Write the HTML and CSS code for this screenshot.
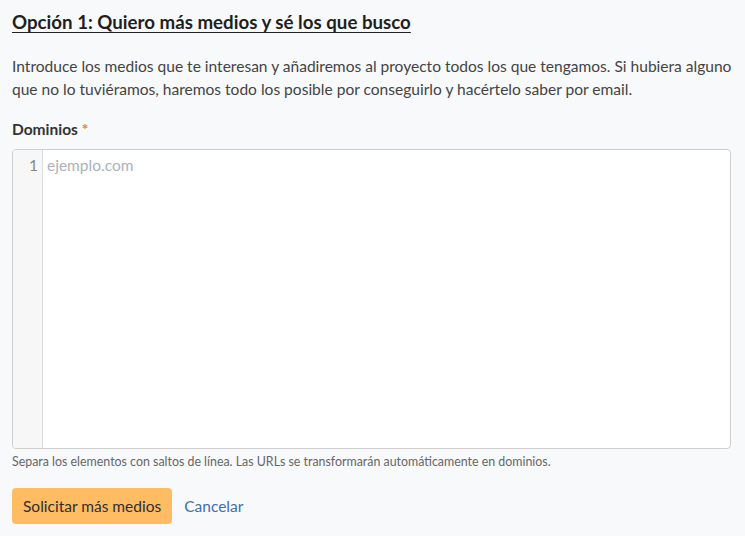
FILE: index.html
```html
<!DOCTYPE html>
<html lang="es">
<head>
<meta charset="utf-8">
<link rel="stylesheet" href="styles.css">
</head>
<body>
<div class="page">
  <h2 class="title">Opción 1: Quiero más medios y sé los que busco</h2>
  <p class="intro">Introduce los medios que te interesan y añadiremos al proyecto todos los que tengamos. Si hubiera alguno que no lo tuviéramos, haremos todo los posible por conseguirlo y hacértelo saber por email.</p>
  <label class="label">Dominios <span class="req">*</span></label>
  <div class="editor">
    <div class="gutter"><span class="ln">1</span></div>
    <div class="content"><span class="placeholder">ejemplo.com</span></div>
  </div>
  <p class="help">Separa los elementos con saltos de línea. Las URLs se transformarán automáticamente en dominios.</p>
  <div class="actions">
    <button class="btn">Solicitar más medios</button>
    <a class="cancel" href="#">Cancelar</a>
  </div>
</div>
</body>
</html>
```
FILE: styles.css
```css
html, body {
  margin: 0;
  padding: 0;
  background: #f8f9fb;
}
body {
  font-family: "Lato", "Noto Sans", sans-serif;
  color: #3d3d3d;
}
.page {
  padding: 10px 14px 0 12px;
}
.title {
  margin: 0;
  font-size: 18.7px;
  line-height: 24px;
  font-weight: 700;
  color: #1f1f1f;
  text-decoration: underline;
  text-decoration-thickness: 1px;
  text-underline-offset: 3px;
}
.intro {
  margin: 21px -10px 0 0;
  font-size: 15.55px;
  line-height: 23px;
  color: #444;
}
.label {
  display: block;
  margin-top: 18px;
  font-size: 15.5px;
  line-height: 20px;
  font-weight: 700;
  color: #333;
}
.req {
  color: #e5873e;
}
.editor {
  margin-top: 10px;
  height: 298px;
  border: 1px solid #cfcfcf;
  border-radius: 4px;
  background: #fff;
  display: flex;
  overflow: hidden;
}
.gutter {
  width: 30px;
  background: #f7f7f7;
  border-right: 1px solid #ddd;
  text-align: right;
  box-sizing: border-box;
  padding: 5px 4px 0 0;
}
.ln {
  font-size: 15.5px;
  line-height: 20px;
  color: #888;
}
.content {
  flex: 1;
  padding: 5px 0 0 4px;
}
.placeholder {
  font-size: 15.5px;
  line-height: 20px;
  color: #aab2bb;
}
.help {
  margin: 5px 0 0;
  font-size: 12.4px;
  line-height: 16px;
  color: #666;
}
.actions {
  margin-top: 18px;
  display: flex;
  align-items: center;
  gap: 12px;
}
.btn {
  height: 36px;
  padding: 0 11px;
  border: none;
  border-radius: 4px;
  background: #ffbc63;
  font-family: inherit;
  font-size: 15.5px;
  color: #2e2e2e;
}
.cancel {
  font-size: 15.5px;
  color: #3d6fb6;
  text-decoration: none;
}
```
